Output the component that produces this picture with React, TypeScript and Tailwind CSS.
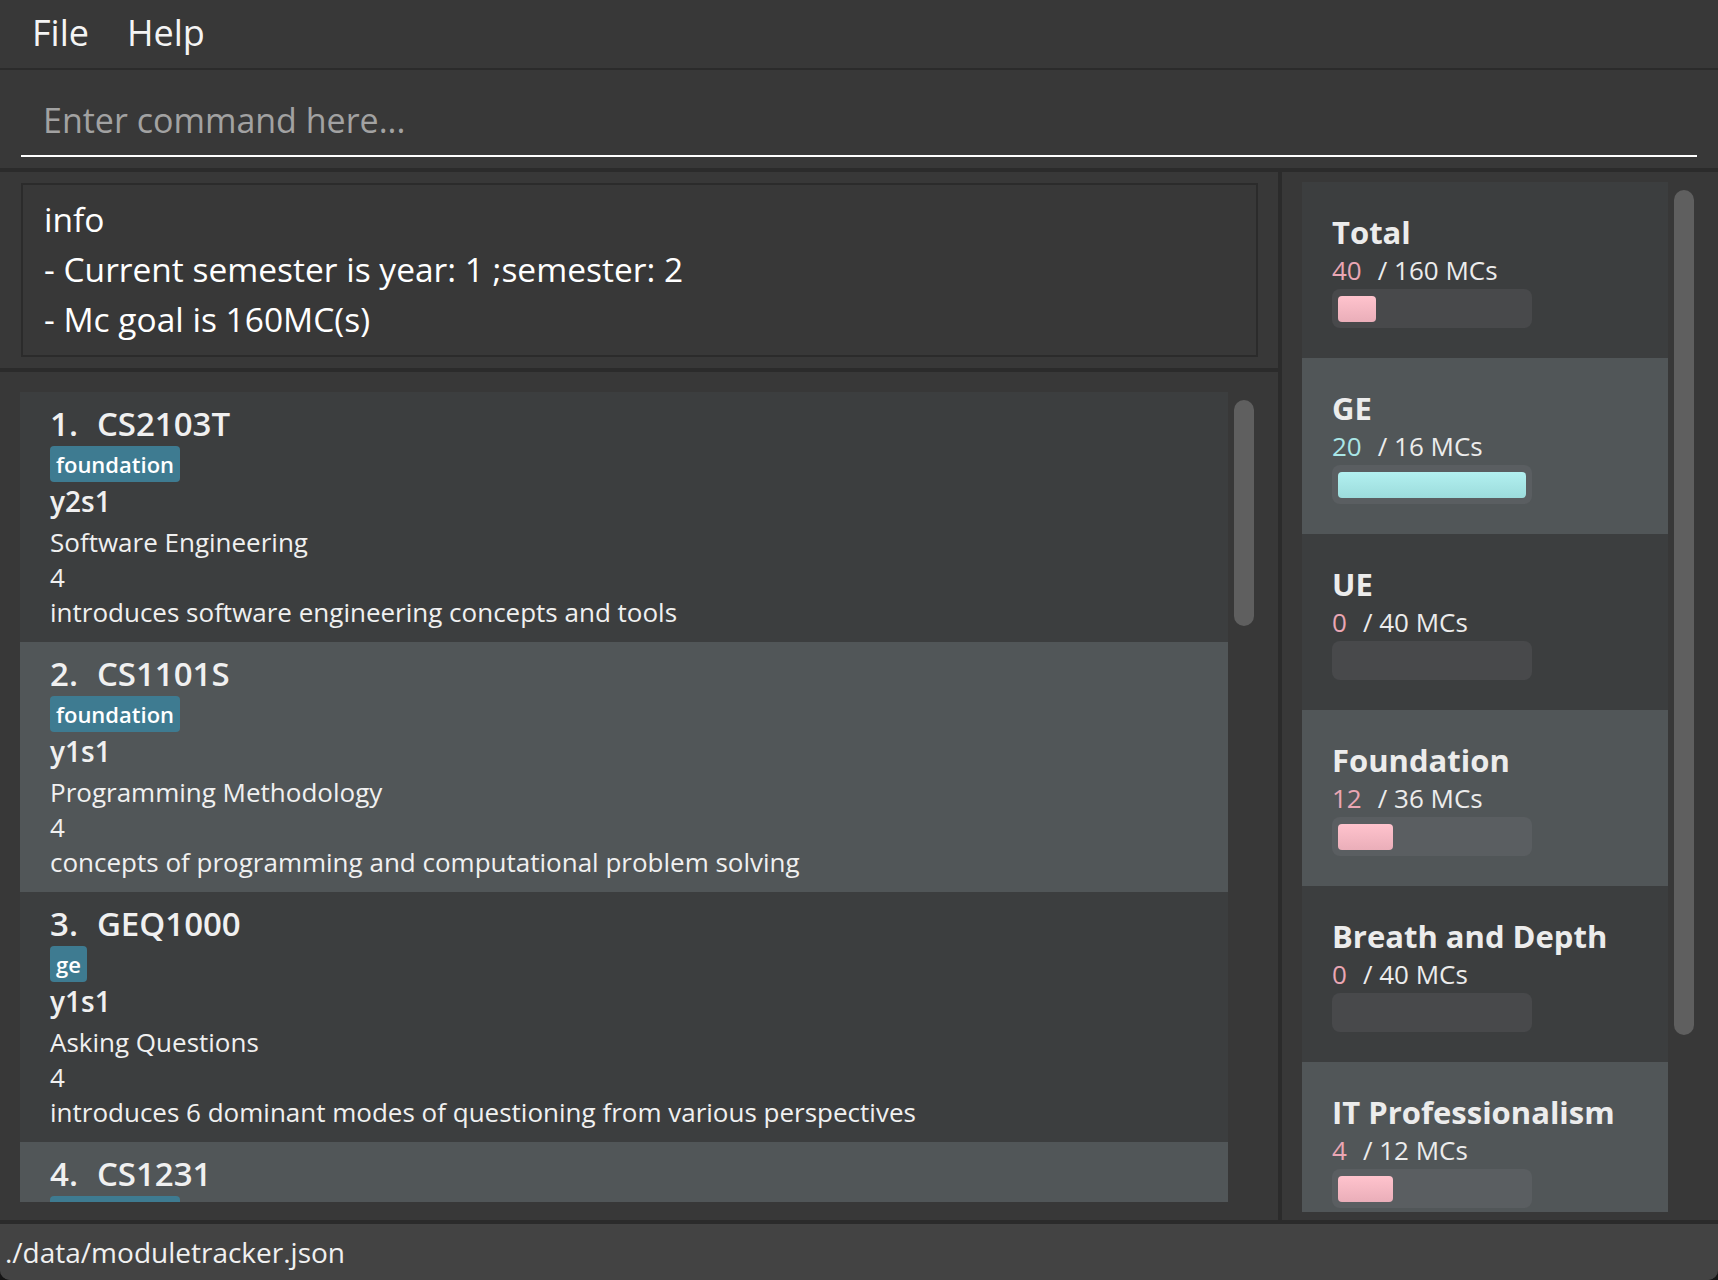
import React from "react";

type Module = {
  code: string;
  tag: string;
  sem: string;
  name: string;
  mc: number;
  desc: string;
};

type Goal = {
  label: string;
  done: number;
  goal: number;
};

const modules: Module[] = [
  { code: "CS2103T", tag: "foundation", sem: "y2s1", name: "Software Engineering", mc: 4, desc: "introduces software engineering concepts and tools" },
  { code: "CS1101S", tag: "foundation", sem: "y1s1", name: "Programming Methodology", mc: 4, desc: "concepts of programming and computational problem solving" },
  { code: "GEQ1000", tag: "ge", sem: "y1s1", name: "Asking Questions", mc: 4, desc: "introduces 6 dominant modes of questioning from various perspectives" },
  { code: "CS1231", tag: "foundation", sem: "y1s1", name: "Discrete Structures", mc: 4, desc: "introduces mathematical tools required in the study of computer science" },
];

const goals: Goal[] = [
  { label: "Total", done: 40, goal: 160 },
  { label: "GE", done: 20, goal: 16 },
  { label: "UE", done: 0, goal: 40 },
  { label: "Foundation", done: 12, goal: 36 },
  { label: "Breath and Depth", done: 0, goal: 40 },
  { label: "IT Professionalism", done: 4, goal: 12 },
];

// javafx progress bar keeps a little inset, so the fill is not exactly linear
function fillWidth(done: number, goal: number) {
  if (done <= 0) return 0;
  const p = Math.min(1, done / goal);
  return Math.max(0, Math.min(188, Math.round(204 * p - 13)));
}

function ModuleCard({ mod, index }: { mod: Module; index: number }) {
  const odd = index % 2 === 1;
  return (
    <div
      className={
        "shrink-0 h-[250px] pl-[30px] pt-[10px] pb-[12px] text-[#f0f0f0] " +
        (odd ? "bg-[#515658]" : "bg-[#3c3e3f]")
      }
    >
      <div className="flex text-[33px] font-semibold leading-[44px]">
        <span>{index + 1}.</span>
        <span className="ml-[19px]">{mod.code}</span>
      </div>
      <div className="flex">
        <span className="flex h-[36px] items-center rounded-[4px] bg-[#3e7b91] px-[6px] text-[22px] font-semibold text-white">
          {mod.tag}
        </span>
      </div>
      <div className="text-[28px] font-semibold leading-[38px]">{mod.sem}</div>
      <div className="mt-[5px] text-[26px] leading-[35px]">
        <div>{mod.name}</div>
        <div>{mod.mc}</div>
        <div className="whitespace-nowrap">{mod.desc}</div>
      </div>
    </div>
  );
}

function GoalCard({ goal, index }: { goal: Goal; index: number }) {
  const odd = index % 2 === 1;
  const met = goal.done >= goal.goal;
  const w = fillWidth(goal.done, goal.goal);
  return (
    <div
      className={
        "shrink-0 h-[176px] pl-[30px] pt-[29px] " +
        (odd ? "bg-[#515658]" : "bg-[#3c3e3f]")
      }
    >
      <div className="text-[31px] font-bold leading-[42px] text-[#ececec]">{goal.label}</div>
      <div className="flex text-[26px] leading-[35px]">
        <span className={met ? "text-[#a9e6e6]" : "text-[#eaa6b4]"}>{goal.done}</span>
        <span className="ml-[16px] text-[#ececec]">/ {goal.goal} MCs</span>
      </div>
      <div
        className={
          "mt-[1px] flex h-[39px] w-[200px] items-center rounded-[8px] px-[6px] " +
          (odd ? "bg-[#5a5e61]" : "bg-[#48494b]")
        }
      >
        {w > 0 && (
          <div
            className={
              "h-[26px] rounded-[4px] bg-gradient-to-b " +
              (met ? "from-[#b2f0f0] to-[#9cdcdc]" : "from-[#ffc3cd] to-[#eaaeb9]")
            }
            style={{ width: w }}
          />
        )}
      </div>
    </div>
  );
}

export default function App() {
  return (
    <div className="h-[1280px] w-full bg-[#151515] font-['Open_Sans',sans-serif]">
      <div className="flex h-full flex-col overflow-hidden rounded-b-[10px] bg-[#383838] text-white">
        {/* Menu */}
        <div className="flex h-[70px] shrink-0 border-b-2 border-[#2b2b2b] pl-[32px] text-[36px] leading-[66px] text-[#f4f4f4]">
          <span>File</span>
          <span className="ml-[38px]">Help</span>
        </div>

        {/* Command box */}
        <div className="shrink-0 px-[21px] pt-[20px] pb-[11px]">
          <div className="h-[67px] border-b-2 border-white pl-[22px] text-[34px] leading-[60px] text-[#a2a2a2]">
            Enter command here...
          </div>
        </div>

        {/* Main */}
        <div className="flex min-h-0 flex-1 border-t-4 border-[#2b2b2b]">
          <div className="flex w-[1282px] shrink-0 flex-col border-r-4 border-[#2b2b2b]">
            <div className="shrink-0 pl-[21px] pr-[20px] py-[11px]">
              <div className="h-[174px] border-2 border-[#2b2b2b] pl-[21px] pt-[9px] text-[33.5px] leading-[50px] text-white">
                <div>info</div>
                <div>- Current semester is year: 1 ;semester: 2</div>
                <div>- Mc goal is 160MC(s)</div>
              </div>
            </div>

            <div className="flex min-h-0 flex-1 border-t-4 border-[#2b2b2b] pl-[20px] pt-[20px] pb-[18px]">
              <div className="flex w-[1208px] shrink-0 flex-col overflow-hidden">
                {modules.map((m, i) => (
                  <ModuleCard key={m.code} mod={m} index={i} />
                ))}
              </div>
              <div className="ml-[6px] mt-[8px] h-[226px] w-[20px] rounded-full bg-[#5f5f5f]" />
            </div>
          </div>

          <div className="flex min-h-0 flex-1 pl-[20px] pt-[10px] pb-[8px]">
            <div className="flex w-[366px] shrink-0 flex-col overflow-hidden">
              {goals.map((g, i) => (
                <GoalCard key={g.label} goal={g} index={i} />
              ))}
            </div>
            <div className="ml-[6px] mt-[8px] h-[845px] w-[20px] rounded-full bg-[#5f5f5f]" />
          </div>
        </div>

        {/* Status bar */}
        <div className="h-[60px] shrink-0 border-t-4 border-[#2b2b2b] bg-[#434343] pl-[5px] text-[28px] leading-[56px] text-[#f0f0f0]">
          ./data/moduletracker.json
        </div>
      </div>
    </div>
  );
}
